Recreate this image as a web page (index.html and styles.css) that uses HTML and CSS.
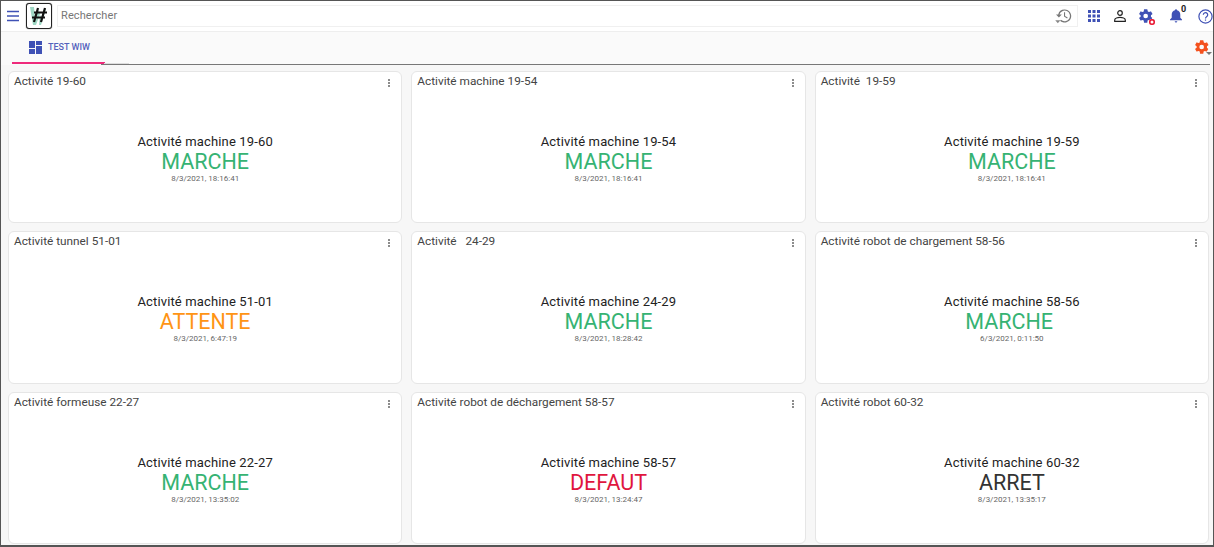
FILE: index.html
```html
<!DOCTYPE html>
<html lang="fr">
<head>
    <meta charset="UTF-8">
    <title>Test WIW</title>
    <link rel="stylesheet" href="styles.css">
</head>
<body>
<div class="frame">
    <header class="topbar">
        <button class="icon-btn menu-btn">
            <svg width="14" height="12" viewBox="0 0 14 12"><path d="M1 1.500h12M1 6h12M1 10.500h12" stroke="#3f51b5" stroke-width="1.400"/></svg>
        </button>
        <div class="logo">
            <svg width="22" height="22" viewBox="0 0 22 22">
                <path d="M2 2h4l1 11 3-8 2 4-4 11H5zM12 9l1 4 3-9h2l-5 16h-2z" fill="#9fd8c4"/>
                <path d="M10 3L6 17M17 3l-4 14M6 7.500h13M4 12.500h13" stroke="#111" stroke-width="2.200" fill="none"/>
            </svg>
        </div>
        <div class="search">
            <span class="search__text">Rechercher</span>
            <svg class="search__history" width="18" height="16" viewBox="0 0 24 22">
                <path d="M13 2a9 9 0 1 1-6.400 15.400l1.200-1.200A7.300 7.300 0 1 0 5.800 9H9l-4 4-4-4h3a9 9 0 0 1 9-7zm-1 4h1.500v5l3.600 2.200-.8 1.200-4.300-2.600z" fill="#777"/>
                <path d="M0 17h7l-3.500 4z" fill="#888"/>
            </svg>
        </div>
        <div class="topbar__icons">
            <svg width="12" height="12" viewBox="0 0 12 12" fill="#3f51b5">
                <path d="M0 0h3v3H0zM4.500 0h3v3h-3zM9 0h3v3H9zM0 4.500h3v3H0zM4.500 4.500h3v3h-3zM9 4.500h3v3H9zM0 9h3v3H0zM4.500 9h3v3h-3zM9 9h3v3H9z"/>
            </svg>
            <svg class="ico-user" width="12" height="12" viewBox="0 0 12 12">
                <circle cx="6" cy="3" r="2.300" fill="none" stroke="#222" stroke-width="1.200"/>
                <path d="M.700 11.300V10c0-1.800 3.200-2.700 5.300-2.700s5.300.9 5.300 2.700v1.300z" fill="none" stroke="#222" stroke-width="1.200"/>
            </svg>
            <span class="ico-gear">
                <svg width="16" height="16" viewBox="0 0 24 24"><path d="M19.400 13c.04-.3.1-.7.1-1s-.04-.7-.1-1l2.100-1.600c.2-.2.2-.4.1-.6l-2-3.500c-.1-.2-.4-.3-.6-.2l-2.500 1c-.5-.4-1.100-.7-1.700-1L14 2.400c0-.2-.2-.4-.5-.4h-4c-.2 0-.4.2-.5.400L8.600 5.100c-.6.300-1.200.6-1.700 1l-2.500-1c-.2-.1-.5 0-.6.2l-2 3.500c-.1.200-.1.400.1.600L4 11c0 .3-.1.700-.1 1s.1.700.1 1l-2.100 1.600c-.2.200-.2.400-.1.600l2 3.500c.1.200.4.300.6.200l2.500-1c.5.400 1.100.7 1.700 1l.4 2.700c0 .2.2.4.5.4h4c.2 0 .4-.2.500-.4l.4-2.700c.6-.3 1.200-.6 1.700-1l2.500 1c.2.100.5 0 .6-.2l2-3.500c.1-.2.1-.4-.1-.6zM11.500 15.500a3.500 3.500 0 1 1 0-7 3.500 3.500 0 0 1 0 7z" fill="#3f51b5"/></svg>
                <i class="ico-gear__dot"></i>
            </span>
            <span class="ico-bell">
                <svg width="12" height="14" viewBox="0 0 14 16"><path d="M7 0a1.200 1.200 0 0 1 1.200 1.300C10.500 1.900 12 3.900 12 6.300V10l2 2v1H0v-1l2-2V6.300c0-2.400 1.500-4.400 3.800-5A1.200 1.200 0 0 1 7 0zM5.500 14h3a1.500 1.500 0 0 1-3 0z" fill="#3f51b5"/></svg>
                <b class="ico-bell__count">0</b>
            </span>
            <svg class="ico-help" width="15" height="15" viewBox="0 0 15 15">
                <circle cx="7.500" cy="7.500" r="6.600" fill="none" stroke="#3f51b5" stroke-width="1.200"/>
                <path d="M5.300 5.800a2.200 2.200 0 1 1 3.500 1.800c-.8.600-1.300 1-1.300 2" fill="none" stroke="#3f51b5" stroke-width="1.200"/>
                <path d="M6.900 10.500h1.200v1.200H6.900z" fill="#3f51b5"/>
            </svg>
        </div>
    </header>

    <nav class="tabbar">
        <div class="tab tab--active">
            <svg width="13" height="13" viewBox="0 0 13 13" fill="#3f51b5"><path d="M0 0h6v7H0zM7 0h6v4H7zM0 8h6v5H0zM7 5h6v8H7z"/></svg>
            <span class="tab__label">TEST WIW</span>
        </div>
        <div class="tabbar__settings">
            <svg width="16" height="16" viewBox="0 0 24 24"><path d="M19.400 13c.04-.3.1-.7.1-1s-.04-.7-.1-1l2.100-1.600c.2-.2.2-.4.1-.6l-2-3.500c-.1-.2-.4-.3-.6-.2l-2.500 1c-.5-.4-1.100-.7-1.700-1L14 2.400c0-.2-.2-.4-.5-.4h-4c-.2 0-.4.2-.5.400L8.600 5.100c-.6.300-1.200.6-1.700 1l-2.500-1c-.2-.1-.5 0-.6.2l-2 3.500c-.1.200-.1.400.1.600L4 11c0 .3-.1.700-.1 1s.1.700.1 1l-2.100 1.600c-.2.200-.2.400-.1.600l2 3.500c.1.200.4.300.6.200l2.500-1c.5.400 1.100.7 1.700 1l.4 2.700c0 .2.2.4.5.4h4c.2 0 .4-.2.500-.4l.4-2.700c.6-.3 1.200-.6 1.700-1l2.500 1c.2.100.5 0 .6-.2l2-3.500c.1-.2.1-.4-.1-.6zM11.500 15.500a3.500 3.500 0 1 1 0-7 3.500 3.500 0 0 1 0 7z" fill="#f4511e"/></svg>
            <i class="tabbar__caret"></i>
        </div>
    </nav>

    <main class="grid">
        <section class="card">
            <h2 class="card__title">Activité 19-60</h2><span class="card__more"></span>
            <div class="card__body">
                <p class="card__name">Activité machine 19-60</p>
                <p class="card__state state--run">MARCHE</p>
                <p class="card__date">8/3/2021, 18:16:41</p>
            </div>
        </section>
        <section class="card">
            <h2 class="card__title">Activité machine 19-54</h2><span class="card__more"></span>
            <div class="card__body">
                <p class="card__name">Activité machine 19-54</p>
                <p class="card__state state--run">MARCHE</p>
                <p class="card__date">8/3/2021, 18:16:41</p>
            </div>
        </section>
        <section class="card">
            <h2 class="card__title">Activité&nbsp; 19-59</h2><span class="card__more"></span>
            <div class="card__body">
                <p class="card__name">Activité machine 19-59</p>
                <p class="card__state state--run">MARCHE</p>
                <p class="card__date">8/3/2021, 18:16:41</p>
            </div>
        </section>
        <section class="card">
            <h2 class="card__title">Activité tunnel 51-01</h2><span class="card__more"></span>
            <div class="card__body">
                <p class="card__name">Activité machine 51-01</p>
                <p class="card__state state--wait">ATTENTE</p>
                <p class="card__date">8/3/2021, 6:47:19</p>
            </div>
        </section>
        <section class="card">
            <h2 class="card__title">Activité&nbsp;&nbsp; 24-29</h2><span class="card__more"></span>
            <div class="card__body">
                <p class="card__name">Activité machine 24-29</p>
                <p class="card__state state--run">MARCHE</p>
                <p class="card__date">8/3/2021, 18:28:42</p>
            </div>
        </section>
        <section class="card">
            <h2 class="card__title">Activité robot de chargement 58-56</h2><span class="card__more"></span>
            <div class="card__body">
                <p class="card__name">Activité machine 58-56</p>
                <p class="card__state state--run">MARCHE&nbsp;</p>
                <p class="card__date">6/3/2021, 0:11:50</p>
            </div>
        </section>
        <section class="card">
            <h2 class="card__title">Activité formeuse 22-27</h2><span class="card__more"></span>
            <div class="card__body">
                <p class="card__name">Activité machine 22-27</p>
                <p class="card__state state--run">MARCHE</p>
                <p class="card__date">8/3/2021, 13:35:02</p>
            </div>
        </section>
        <section class="card">
            <h2 class="card__title">Activité robot de déchargement 58-57</h2><span class="card__more"></span>
            <div class="card__body">
                <p class="card__name">Activité machine 58-57</p>
                <p class="card__state state--fault">DEFAUT</p>
                <p class="card__date">8/3/2021, 13:24:47</p>
            </div>
        </section>
        <section class="card">
            <h2 class="card__title">Activité robot 60-32</h2><span class="card__more"></span>
            <div class="card__body">
                <p class="card__name">Activité machine 60-32</p>
                <p class="card__state state--stop">ARRET</p>
                <p class="card__date">8/3/2021, 13:35:17</p>
            </div>
        </section>
    </main>
</div>
</body>
</html>
```
FILE: styles.css
```css
* {
    box-sizing: border-box;
}

html, body {
    margin: 0;
    padding: 0;
    height: 100%;
}

body {
    font-family: Roboto, "Liberation Sans", sans-serif;
    background: #fff;
    color: #333;
    overflow: hidden;
}

.frame {
    height: 547px;
    display: flex;
    flex-direction: column;
    border: 1px solid #555;
    border-bottom-width: 2px;
    background: #f7f7f7;
}

/* top bar */
.topbar {
    height: 31px;
    flex: none;
    display: flex;
    align-items: center;
    background: #fff;
    border-bottom: 1px solid #eee;
}

.icon-btn {
    border: 0;
    background: none;
    padding: 0;
    display: flex;
}

.menu-btn {
    margin-left: 5px;
}

.logo {
    width: 26px;
    height: 26px;
    margin-left: 6px;
    border: 1px solid #222;
    border-radius: 3px;
    box-shadow: 0 0 1px #222;
    display: flex;
    align-items: center;
    justify-content: center;
    background: #fff;
}

.search {
    width: 1021px;
    height: 22px;
    margin: 0 0 1px 5px;
    padding: 0 4px 0 3px;
    display: flex;
    align-items: center;
    justify-content: space-between;
    border: 1px solid #f0f0f0;
    font-size: 11px;
    color: #777;
}

.search__text {
    letter-spacing: 0.1px;
}

.topbar__icons {
    flex: 1;
    display: flex;
    align-items: center;
    margin-left: 10px;
}

.ico-user {
    margin-left: 14px;
}

.ico-gear {
    position: relative;
    display: flex;
    margin-left: 12px;
}

.ico-gear__dot {
    position: absolute;
    right: -1px;
    bottom: -1px;
    width: 6px;
    height: 6px;
    border-radius: 50%;
    background: #e8112d;
    box-shadow: inset 0 0 0 1.5px #e8112d, inset 0 0 0 3px #fff;
}

.ico-bell {
    position: relative;
    display: flex;
    margin-left: 16px;
}

.ico-bell__count {
    position: absolute;
    left: 11px;
    top: -5px;
    font-size: 9px;
    color: #222;
}

.ico-help {
    margin-left: 16px;
}

/* tabs */
.tabbar {
    position: relative;
    height: 33px;
    flex: none;
    display: flex;
    align-items: stretch;
    justify-content: space-between;
    margin-right: 3px;
    background: #fafafa;
}

.tabbar::before {
    content: "";
    position: absolute;
    left: 100px;
    right: 0;
    bottom: 0;
    height: 1px;
    background: #777;
}

.tabbar::after {
    content: "";
    position: absolute;
    left: 103px;
    width: 25px;
    bottom: 1px;
    height: 1px;
    background: #ddd;
}

.tab {
    width: 93px;
    margin: 0 0 1px 11px;
    padding: 0 0 0 17px;
    display: flex;
    align-items: center;
    gap: 6px;
    border-bottom: 2px solid #ee2a7b;
}

.tab__label {
    font-size: 9px;
    font-weight: 500;
    color: #5462bd;
}

.tabbar__settings {
    position: relative;
    display: flex;
    align-items: center;
    padding: 0 0 3px 0;
}

.tabbar__caret {
    position: absolute;
    right: -2px;
    top: 20px;
    border: 3px solid transparent;
    border-top-color: #777;
}

/* cards */
.grid {
    flex: 1;
    min-height: 0;
    display: grid;
    grid-template-columns: repeat(3, 1fr);
    grid-template-rows: repeat(3, 1fr);
    gap: 8px 9px;
    padding: 6px 4px 1px 7px;
}

.card {
    position: relative;
    background: #fff;
    border: 1px solid #e6e6e6;
    border-radius: 6px;
    padding: 2px 5px;
    display: flex;
    flex-direction: column;
}

.card__title {
    margin: 0;
    font-size: 11.8px;
    font-weight: 400;
    line-height: 15px;
    color: #444;
}

.card__more {
    position: absolute;
    top: 7px;
    right: 11px;
    width: 2px;
    height: 2px;
    border-radius: 50%;
    background: #666;
    box-shadow: 0 3px 0 #666, 0 6px 0 #666;
}

.card__body {
    margin-top: 44px;
    text-align: center;
}

.card__body p {
    margin: 0;
}

.card__name {
    font-size: 13px;
    line-height: 17px;
    letter-spacing: 0.15px;
    color: #222;
}

.card__state {
    font-size: 21.5px;
    line-height: 23px;
    margin-top: 1px;
}

.card__date {
    font-size: 8px;
    line-height: 11px;
    color: #666;
}

.state--run {
    color: #36b373;
}

.state--wait {
    color: #ff9414;
}

.state--fault {
    color: #e0163e;
}

.state--stop {
    color: #333;
}
```
